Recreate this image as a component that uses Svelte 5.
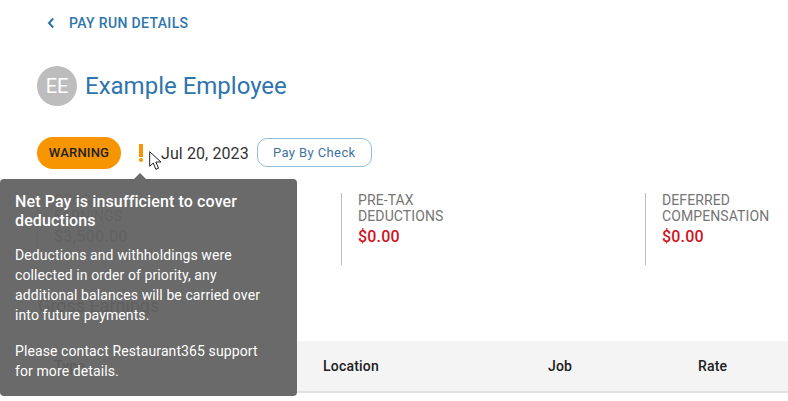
<script lang="ts">
  const stats = [
    { label: 'GROSS EARNINGS', value: '$3,500.00', neg: false },
    { label: 'PRE-TAX DEDUCTIONS', value: '$0.00', neg: true },
    { label: 'DEFERRED COMPENSATION', value: '$0.00', neg: true }
  ];
</script>

<div class="page">
  <a class="back" href="#top">
    <svg width="8" height="12" viewBox="0 0 8 12"><path d="M6.2 1.5 2 6l4.2 4.5" fill="none" stroke="#2e75ae" stroke-width="2" /></svg>
    <span>PAY RUN DETAILS</span>
  </a>

  <div class="employee">
    <div class="avatar">EE</div>
    <h1>Example Employee</h1>
  </div>

  <div class="status">
    <span class="badge">WARNING</span>
    <span class="bang"></span>
    <svg class="cursor" width="14" height="20" viewBox="0 0 14 20"><path d="M.7.7v14.6l3.6-3.3 2.5 6.3 2.7-1.1-2.6-6.2h5.1z" fill="#fff" stroke="#222" stroke-width="1" /></svg>
    <span class="date">Jul 20, 2023</span>
    <button>Pay By Check</button>
  </div>

  <div class="stats">
    {#each stats as s}
      <div class="stat">
        <div class="label">{s.label}</div>
        <div class="value" class:neg={s.neg}>{s.value}</div>
      </div>
    {/each}
  </div>

  <h2>Gross Earnings</h2>

  <div class="thead">
    <span>Type</span>
    <span>Location</span>
    <span>Job</span>
    <span>Rate</span>
  </div>

  <div class="tooltip">
    <h3>Net Pay is insufficient to cover deductions</h3>
    <p>Deductions and withholdings were collected in order of priority, any additional balances will be carried over into future payments.</p>
    <p>Please contact Restaurant365 support for more details.</p>
  </div>
</div>

<style>
  :global(body) {
    background: #fff;
    overflow: hidden;
  }

  .page {
    position: relative;
    height: 401px;
    overflow: hidden;
    font-family: Roboto, sans-serif;
    color: #212121;
  }

  .back {
    display: flex;
    align-items: center;
    gap: 14px;
    height: 20px;
    padding: 13px 0 0 47px;
    font-size: 14px;
    font-weight: 500;
    letter-spacing: 0.35px;
    color: #2e75ae;
    text-decoration: none;
  }

  .employee {
    display: flex;
    align-items: center;
    gap: 8px;
    padding: 33px 0 0 37px;
  }

  .avatar {
    width: 40px;
    height: 40px;
    border-radius: 50%;
    background: #bdbdbd;
    color: #fff;
    font-size: 20px;
    line-height: 40px;
    text-align: center;
  }

  h1 {
    margin: 0;
    font-size: 24px;
    font-weight: 400;
    color: #2e75ae;
  }

  .status {
    position: relative;
    display: flex;
    align-items: center;
    height: 32px;
    margin-top: 31px;
    padding-left: 37px;
  }

  .badge {
    width: 84px;
    height: 32px;
    border-radius: 16px;
    background: #f79500;
    font-size: 13px;
    font-weight: 500;
    letter-spacing: 0.2px;
    line-height: 32px;
    text-align: center;
    color: #212121;
  }

  .bang {
    position: relative;
    width: 4px;
    height: 13px;
    margin: -5px 0 0 18px;
    background: #f79500;
  }

  .bang::after {
    content: '';
    position: absolute;
    left: 0;
    top: 14px;
    width: 4px;
    height: 4px;
    border-radius: 50%;
    background: #f79500;
  }

  .cursor {
    position: absolute;
    left: 149px;
    top: 14px;
  }

  .date {
    margin-left: 18px;
    font-size: 16px;
    letter-spacing: 0.1px;
    color: #333;
  }

  button {
    width: 115px;
    height: 29px;
    margin: -2px 0 0 8px;
    border: 1px solid #93bbd8;
    border-radius: 10px;
    background: #fff;
    font-family: inherit;
    font-size: 13px;
    letter-spacing: 0.4px;
    color: #3f739f;
  }

  .stats {
    display: grid;
    grid-template-columns: 304px 304px 1fr;
    margin: 24px 0 0 37px;
  }

  .stat {
    height: 72px;
    padding-left: 16px;
    border-left: 1px solid #bdbdbd;
  }

  .label {
    width: 110px;
    margin-top: -1px;
    font-size: 14px;
    letter-spacing: 0.1px;
    line-height: 16px;
    color: #757575;
  }

  .value {
    margin-top: 3px;
    font-size: 16px;
    font-weight: 500;
    letter-spacing: 0.2px;
    line-height: 20px;
    color: #757575;
  }

  .neg {
    color: #d0121e;
  }

  h2 {
    margin: 31px 0 0 38px;
    font-size: 18px;
    font-weight: 400;
    line-height: 20px;
    color: #424242;
  }

  .thead {
    display: grid;
    grid-template-columns: 269px 225px 150px 1fr;
    align-items: center;
    height: 50px;
    margin-top: 25px;
    padding-left: 54px;
    background: #f4f4f4;
    border-bottom: 2px solid #e2e2e2;
    font-size: 14px;
    font-weight: 500;
    letter-spacing: 0.2px;
    color: #212121;
  }

  .tooltip {
    position: absolute;
    left: 0;
    top: 179px;
    box-sizing: border-box;
    width: 297px;
    height: 217px;
    padding: 13px 35px 13px 15px;
    border-radius: 4px;
    background: rgba(97, 97, 97, 0.94);
    font-size: 14px;
    letter-spacing: 0.1px;
    line-height: 20px;
    color: #fff;
  }

  .tooltip::before {
    content: '';
    position: absolute;
    left: 134px;
    top: -6px;
    border-left: 6px solid transparent;
    border-right: 6px solid transparent;
    border-bottom: 6px solid rgba(97, 97, 97, 0.94);
  }

  h3 {
    margin: 0 -20px 15px 0;
    font-size: 16px;
    font-weight: 500;
    letter-spacing: 0.12px;
    line-height: 19px;
  }

  p {
    margin: 0 0 16px;
  }
</style>
